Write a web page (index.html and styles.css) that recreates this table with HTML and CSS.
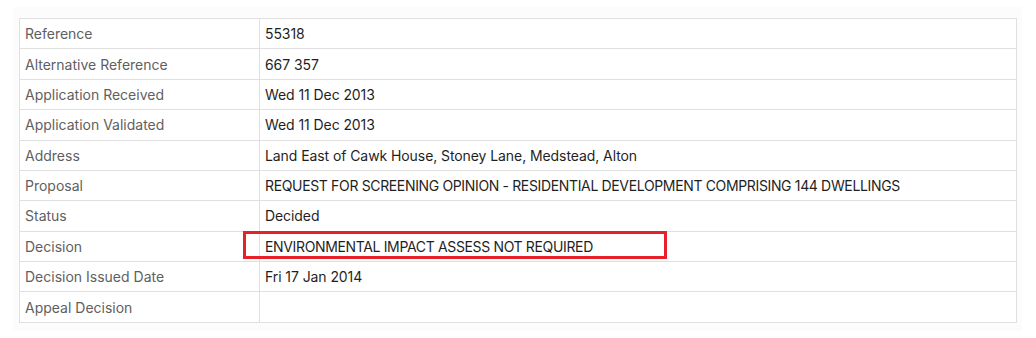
FILE: index.html
```html
<!DOCTYPE html>
<html lang="en">
<head>
<meta charset="utf-8">
<title>Application details</title>
<link rel="stylesheet" href="styles.css">
</head>
<body>
<div class="panel">
  <div class="table-wrap">
    <table class="details">
      <tbody>
        <tr><th>Reference</th><td>55318</td></tr>
        <tr><th>Alternative Reference</th><td>667 357</td></tr>
        <tr><th>Application Received</th><td>Wed 11 Dec 2013</td></tr>
        <tr><th>Application Validated</th><td>Wed 11 Dec 2013</td></tr>
        <tr><th>Address</th><td>Land East of Cawk House, Stoney Lane, Medstead, Alton</td></tr>
        <tr><th>Proposal</th><td class="upper">REQUEST FOR SCREENING OPINION - RESIDENTIAL DEVELOPMENT COMPRISING 144 DWELLINGS</td></tr>
        <tr><th>Status</th><td>Decided</td></tr>
        <tr><th>Decision</th><td class="upper">ENVIRONMENTAL IMPACT ASSESS NOT REQUIRED</td></tr>
        <tr><th>Decision Issued Date</th><td>Fri 17 Jan 2014</td></tr>
        <tr><th>Appeal Decision</th><td></td></tr>
      </tbody>
    </table>
    <div class="highlight"></div>
  </div>
</div>
</body>
</html>
```

FILE: styles.css
```css
html, body {
  margin: 0;
  padding: 0;
  background: #ffffff;
}
body {
  font-family: Inter, "Liberation Sans", Arial, sans-serif;
  font-size: 14px;
  color: #222222;
}
.panel {
  margin: 7px 14px 0 13px;
  padding: 11px 5px 8px 6px;
  background: #fcfcfc;
}
.table-wrap {
  position: relative;
}
.details {
  width: 998px;
  border-collapse: collapse;
  background: #ffffff;
  table-layout: fixed;
}
.details th,
.details td {
  border: 1px solid #e0e0e0;
  padding: 4.2px 5px;
  line-height: 21px;
  text-align: left;
  vertical-align: middle;
  font-weight: 400;
}
.details th {
  width: 229px;
  color: #5f5f5f;
}
.details td {
  color: #1f1f1f;
  letter-spacing: -0.08px;
}
.details td.upper {
  letter-spacing: -0.35px;
}
.highlight {
  position: absolute;
  left: 224px;
  top: 213px;
  width: 418px;
  height: 22px;
  border: 3.5px solid #e8202a;
}
```
